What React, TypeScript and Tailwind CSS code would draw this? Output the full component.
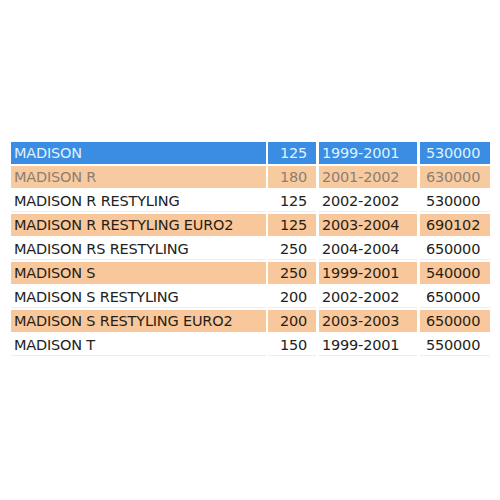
import React from "react";

type Row = { name: string; cc: string; years: string; price: string; kind: "sel" | "dim" | "odd" | "even" };

const rows: Row[] = [
  { name: "MADISON", cc: "125", years: "1999-2001", price: "530000", kind: "sel" },
  { name: "MADISON R", cc: "180", years: "2001-2002", price: "630000", kind: "dim" },
  { name: "MADISON R RESTYLING", cc: "125", years: "2002-2002", price: "530000", kind: "even" },
  { name: "MADISON R RESTYLING EURO2", cc: "125", years: "2003-2004", price: "690102", kind: "odd" },
  { name: "MADISON RS RESTYLING", cc: "250", years: "2004-2004", price: "650000", kind: "even" },
  { name: "MADISON S", cc: "250", years: "1999-2001", price: "540000", kind: "odd" },
  { name: "MADISON S RESTYLING", cc: "200", years: "2002-2002", price: "650000", kind: "even" },
  { name: "MADISON S RESTYLING EURO2", cc: "200", years: "2003-2003", price: "650000", kind: "odd" },
  { name: "MADISON T", cc: "150", years: "1999-2001", price: "550000", kind: "even" },
];

function cellCls(kind: Row["kind"]) {
  if (kind === "sel") return "bg-[#3a8de2] text-[#dff3ff]";
  if (kind === "dim") return "bg-[#f8caa0] text-[#8d7f72]";
  if (kind === "odd") return "bg-[#f8c89c] text-[#2a1e14]";
  return "bg-white text-[#222222] border-b border-[#eeeeee]";
}

export default function App() {
  return (
    <div className="w-[500px] h-[500px] bg-white pt-[142px] pl-[11px]" style={{ fontFamily: '"DejaVu Sans", Verdana, sans-serif' }}>
      <div className="flex flex-col gap-[2px] w-[479px]">
        {rows.map((r, i) => {
          const c = cellCls(r.kind);
          return (
            <div key={i} className="flex h-[22px] text-[14.5px] leading-[23px] tracking-[-0.2px]">
              <div className={`${c} w-[255px] pl-[3px]`}>{r.name}</div>
              <div className={`${c} w-[48px] ml-[2px] pr-[9px] text-right`}>{r.cc}</div>
              <div className={`${c} w-[98px] ml-[3px] pl-[3px]`}>{r.years}</div>
              <div className={`${c} w-[70px] ml-[3px] pl-[6px]`}>{r.price}</div>
            </div>
          );
        })}
      </div>
    </div>
  );
}
